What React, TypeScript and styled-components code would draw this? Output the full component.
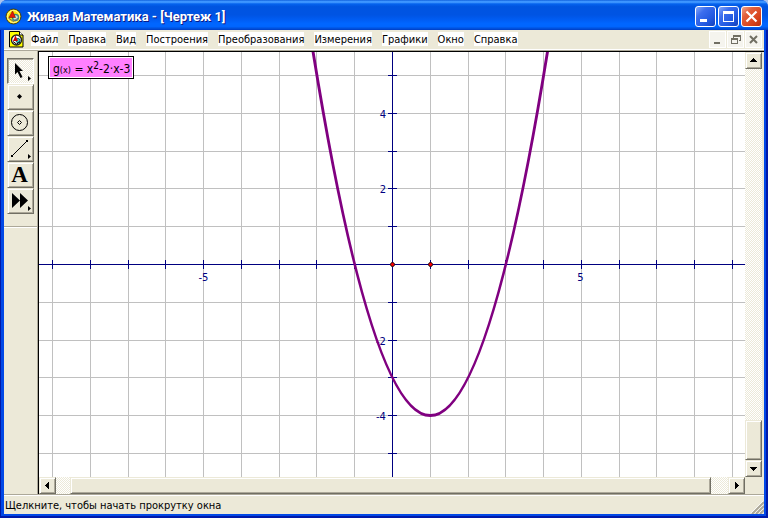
import React from "react";
import styled, { createGlobalStyle, css } from "styled-components";

const FACE = "#ece9d8";
const SHADOW = "#aca899";
const DARK = "#716f64";
const NAVY = "#000080";
const UI_FONT = `"DejaVu Sans Condensed", "DejaVu Sans", sans-serif`;

const GlobalStyle = createGlobalStyle`
  * { box-sizing: border-box; }
  body { margin: 0; background: #a9c3ee; font-family: ${UI_FONT}; font-size: 11px; color: #000; }
  button { margin: 0; padding: 0; border: 0; font: inherit; color: inherit; }
  svg { display: block; }
`;

const raised = css`
  background: ${FACE};
  border: 1px solid;
  border-color: ${FACE} ${DARK} ${DARK} ${FACE};
  box-shadow: inset 1px 1px 0 #fff, inset -1px -1px 0 ${SHADOW};
`;

const checker = css`
  background: repeating-conic-gradient(#fff 0 25%, ${FACE} 0 50%) 0 0 / 2px 2px;
`;

const Window = styled.div`
  display: flex;
  flex-direction: column;
  height: 100vh;
  min-height: 320px;
  border-radius: 7px 7px 0 0;
  overflow: hidden;
  background: #0148e6;
`;

const TitleBar = styled.header`
  display: flex;
  align-items: center;
  flex: none;
  height: 30px;
  padding: 3px 6px 0 5px;
  gap: 5px;
  background: linear-gradient(
    #0a5ad8 0, #3d95ff 4%, #3d95ff 8%, #0563ee 13%, #0054e0 22%, #0054e3 50%,
    #005cf2 65%, #0066ff 78%, #0066ff 88%, #0050dc 95%, #003dc4 100%
  );
`;

const Title = styled.h1`
  flex: 1;
  margin: 0;
  font-family: Roboto, sans-serif;
  font-size: 13px;
  line-height: 20px;
  font-weight: 700;
  color: #fff;
  white-space: nowrap;
  text-shadow: 1px 1px 0 #0a1883;
`;

const CaptionGroup = styled.div`
  display: flex;
  gap: 2px;
`;

const CaptionButton = styled.button<{ $close?: boolean }>`
  width: 21px;
  height: 21px;
  border: 1px solid #fff;
  border-radius: 3px;
  background: ${(p) =>
    p.$close
      ? "linear-gradient(135deg, #f0a48c 0, #e2603c 30%, #d8431c 70%, #b83010 100%)"
      : "linear-gradient(135deg, #86a8f8 0, #3c6eee 30%, #2158e0 70%, #1440b8 100%)"};
`;

const Frame = styled.div`
  display: flex;
  flex-direction: column;
  flex: 1;
  min-height: 0;
  padding: 0 2px 2px 3px;
  border: solid #0019a8;
  border-width: 0 2px 2px 1px;
`;

const MenuBar = styled.nav`
  display: flex;
  align-items: flex-start;
  flex: none;
  height: 21px;
  padding: 1px 2px 0 5px;
  background: ${FACE};
  border-bottom: 1px solid ${SHADOW};
  box-shadow: inset 0 -1px 0 #fff;
`;

const MenuList = styled.div`
  display: flex;
  flex: 1;
  gap: 10px;
  padding: 1px 0 0 7px;
`;

const MenuItem = styled.button`
  height: 14px;
  padding-top: 1px;
  background: #fff;
  line-height: 13px;
  white-space: nowrap;
`;

const ChildButtons = styled.div`
  display: flex;
  gap: 1px;
`;

const ChildButton = styled.button`
  width: 17px;
  height: 17px;
  background: #f5f4ee;
  border: 1px solid #fff;
`;

const Workspace = styled.div`
  display: flex;
  flex: 1;
  min-height: 0;
  background: ${FACE};
`;

const ToolPanel = styled.div`
  flex: none;
  width: 34px;
  padding-top: 7px;
  border-right: 1px solid ${SHADOW};
`;

const ToolList = styled.div`
  display: flex;
  flex-direction: column;
  padding: 0 3px 12px;
  border-bottom: 1px solid ${SHADOW};
  box-shadow: 0 1px 0 #fff;
`;

const ToolButton = styled.button<{ $pressed?: boolean }>`
  width: 27px;
  height: 26px;
  ${raised}
  ${(p) =>
    p.$pressed &&
    css`
      ${checker}
      border-color: ${DARK} #fff #fff ${DARK};
      box-shadow: inset 1px 1px 0 ${SHADOW};
    `}
`;

const Document = styled.main`
  display: grid;
  grid-template-columns: minmax(0, 1fr) 17px;
  grid-template-rows: minmax(0, 1fr) 17px;
  flex: 1;
  min-width: 0;
  padding-right: 2px;
  border: solid #000;
  border-width: 1px 0 0 1px;
`;

const Sketch = styled.div`
  position: relative;
  overflow: hidden;
  background: #fff;
`;

const Formula = styled.div`
  position: absolute;
  left: 9px;
  top: 4px;
  height: 23px;
  padding: 2px 3px 0 4px;
  border: 1px solid #000;
  box-shadow: inset 0 0 0 1px #fff;
  background: #ff80ff;
  font-size: 12px;
  line-height: 20px;
  white-space: nowrap;
  small { font-size: 9px; }
  sup { font-size: 10px; line-height: 0; vertical-align: 4px; }
`;

const ScrollBar = styled.div<{ $vertical?: boolean }>`
  display: flex;
  flex-direction: ${(p) => (p.$vertical ? "column" : "row")};
  ${checker}
`;

const ScrollButton = styled.button`
  flex: none;
  width: 17px;
  height: 17px;
  ${raised}
`;

const Gap = styled.div<{ $grow: number }>`
  flex: ${(p) => p.$grow} 0 0;
`;

const Thumb = styled.div<{ $grow: number }>`
  flex: ${(p) => p.$grow} 0 0;
  ${raised}
`;

const StatusBar = styled.footer`
  display: flex;
  justify-content: space-between;
  align-items: flex-end;
  flex: none;
  height: 20px;
  padding-left: 1px;
  background: ${FACE};
  border-top: 1px solid ${SHADOW};
  box-shadow: inset 0 1px 0 #fff;
  line-height: 16px;
  white-space: nowrap;
`;

const menus = ["Файл", "Правка", "Вид", "Построения", "Преобразования", "Измерения", "Графики", "Окно", "Справка"];

const UNIT = 37.77;
const ORIGIN = { x: 353, y: 212 };
const px = (x: number) => ORIGIN.x + 0.5 + x * UNIT;
const py = (y: number) => ORIGIN.y + 0.5 - y * UNIT;
const snapX = (i: number) => Math.round(ORIGIN.x + i * UNIT) + 0.5;
const snapY = (i: number) => Math.round(ORIGIN.y - i * UNIT) + 0.5;
const range = (from: number, to: number) => Array.from({ length: to - from + 1 }, (_, i) => from + i);

function Plot() {
  const columns = range(-9, 30);
  const rows = range(-20, 5);
  return (
    <svg width="100%" height="100%" role="img" aria-label="g(x) = x²-2·x-3">
      <g shapeRendering="crispEdges" fill="none">
        <g stroke="#c0c0c0">
          {columns.map((i) => <line key={i} x1={snapX(i)} x2={snapX(i)} y1="0" y2="100%" />)}
          {rows.map((i) => <line key={i} x1="0" x2="100%" y1={snapY(i)} y2={snapY(i)} />)}
        </g>
        <g stroke={NAVY}>
          <line x1="0" x2="100%" y1={snapY(0)} y2={snapY(0)} />
          <line x1={snapX(0)} x2={snapX(0)} y1="0" y2="100%" />
          {columns.map((i) => <line key={i} x1={snapX(i)} x2={snapX(i)} y1={ORIGIN.y - 4} y2={ORIGIN.y + 5} />)}
          {rows.map((i) => <line key={i} x1={ORIGIN.x - 4} x2={ORIGIN.x + 5} y1={snapY(i)} y2={snapY(i)} />)}
        </g>
      </g>
      <g fill={NAVY} fontFamily='"DejaVu Sans", sans-serif' fontSize="10">
        <g textAnchor="end">
          <text x="347" y={snapY(4) + 4}>4</text>
          <text x="347" y={snapY(2) + 4}>2</text>
          <text x="347" y={snapY(-2) + 4}>-2</text>
          <text x="347" y={snapY(-4) + 4}>-4</text>
        </g>
        <g textAnchor="middle">
          <text x={snapX(-5)} y="229">-5</text>
          <text x={snapX(5) - 1} y="229">5</text>
        </g>
      </g>
      <path
        d={`M${px(-3)} ${py(12)} Q${px(1)} ${py(-20)} ${px(5)} ${py(12)}`}
        fill="none"
        stroke="#800080"
        strokeWidth="3"
      />
      {[0, 1].map((i) => (
        <circle key={i} cx={snapX(i)} cy={snapY(0)} r="2" fill="#f00" stroke="#301010" />
      ))}
    </svg>
  );
}

const Logo = () => (
  <svg width="17" height="17" viewBox="0 0 17 17" aria-hidden="true">
    <circle cx="8.500" cy="8.500" r="7.500" fill="#ffe600" stroke="#3a3a20" />
    <circle cx="8.500" cy="8.500" r="6" fill="none" stroke="#fff3a0" />
    <circle cx="10.500" cy="9.500" r="3" fill="#c8ece0" stroke="#3a8a88" strokeWidth="1.400" />
    <path d="M7.500 3L10.500 9.500H4z" fill="#e81808" stroke="#801000" strokeWidth=".6" />
    <path d="M3.500 10l5 3.500L13 10" fill="none" stroke="#667" />
  </svg>
);

const DocumentIcon = () => (
  <svg width="15" height="17" viewBox="0 0 15 17" aria-hidden="true">
    <path d="M.5 .5h10l3.500 3.500v12H.5z" fill="#ffff00" stroke="#000" />
    <path d="M10.500 .5v3.500h3.500" fill="#fff" stroke="#000" />
    <circle cx="7.500" cy="9" r="5" fill="#fff" stroke="#222" strokeWidth="1.400" />
    <circle cx="9" cy="9.500" r="2" fill="#40d0d0" stroke="#006060" />
    <path d="M6.500 4.500L9 10H4z" fill="#d00000" />
    <path d="M4 10.500l3.500 2.500 3.500-2" fill="none" stroke="#000" />
  </svg>
);

const Flyout = () => <path d="M20 17l3 2.500-3 2.500z" fill="#000" />;

const tools: { label: string; art: React.ReactNode }[] = [
  {
    label: "Стрелка",
    art: <><path d="M7 4l8 8h-3.500l3 6-2 1-3-6L7 15.500z" /><Flyout /></>,
  },
  { label: "Точка", art: <path d="M11.500 9l2.500 2.500-2.500 2.500L9 11.500z" /> },
  {
    label: "Окружность",
    art: (
      <g fill="none" stroke="#000">
        <circle cx="11.500" cy="11.500" r="8" />
        <path d="M11.500 9.500l2 2-2 2-2-2z" />
      </g>
    ),
  },
  {
    label: "Отрезок",
    art: (
      <>
        <path d="M4 19L19 4" stroke="#000" />
        <path d="M3 18h2v2H3zM18 3h2v2h-2z" />
        <Flyout />
      </>
    ),
  },
  {
    label: "Текст",
    art: (
      <text x="11.500" y="19" textAnchor="middle" fontFamily='"Liberation Serif", serif' fontWeight="700" fontSize="23">
        A
      </text>
    ),
  },
  {
    label: "Инструменты",
    art: <><path d="M4 4l8 7.500L4 19zM12 4l8 7.500L12 19z" /><Flyout /></>,
  },
];

const Arrow = ({ d }: { d: string }) => (
  <svg width="15" height="15" viewBox="0 0 15 15" shapeRendering="crispEdges" aria-hidden="true">
    <path d={d} />
  </svg>
);

export default function App() {
  return (
    <>
      <GlobalStyle />
      <Window>
        <TitleBar>
          <Logo />
          <Title>Живая Математика - [Чертеж 1]</Title>
          <CaptionGroup>
            <CaptionButton aria-label="Свернуть">
              <svg width="19" height="19"><path d="M4 12h7v3H4z" fill="#fff" /></svg>
            </CaptionButton>
            <CaptionButton aria-label="Развернуть">
              <svg width="19" height="19"><path d="M4 4h11v11H4zM5 7v7h9V7z" fill="#fff" fillRule="evenodd" /></svg>
            </CaptionButton>
            <CaptionButton $close aria-label="Закрыть">
              <svg width="19" height="19"><path d="M4.500 4.500l10 10m0-10l-10 10" stroke="#fff" strokeWidth="2.200" /></svg>
            </CaptionButton>
          </CaptionGroup>
        </TitleBar>
        <Frame>
          <MenuBar>
            <DocumentIcon />
            <MenuList>
              {menus.map((name) => <MenuItem key={name}>{name}</MenuItem>)}
            </MenuList>
            <ChildButtons>
              <ChildButton aria-label="Свернуть чертеж">
                <svg width="15" height="15"><path d="M4 10h6v2H4z" fill={DARK} /></svg>
              </ChildButton>
              <ChildButton aria-label="Восстановить чертеж">
                <svg width="15" height="15" shapeRendering="crispEdges">
                  <path d="M5 3h8v6h-2V8h1V5H6v1H5zM3 6h7v6H3zM4 8v3h5V8z" fill={DARK} fillRule="evenodd" />
                </svg>
              </ChildButton>
              <ChildButton aria-label="Закрыть чертеж">
                <svg width="15" height="15"><path d="M4 4l7 7m0-7l-7 7" stroke={DARK} strokeWidth="2" /></svg>
              </ChildButton>
            </ChildButtons>
          </MenuBar>
          <Workspace>
            <ToolPanel>
              <ToolList>
                {tools.map((tool, i) => (
                  <ToolButton key={tool.label} $pressed={i === 0} aria-pressed={i === 0} aria-label={tool.label}>
                    <svg width="25" height="24" viewBox="0 0 25 24">{tool.art}</svg>
                  </ToolButton>
                ))}
              </ToolList>
            </ToolPanel>
            <Document>
              <Sketch>
                <Plot />
                <Formula>g<small>(x)</small> = x<sup>2</sup>-2·x-3</Formula>
              </Sketch>
              <ScrollBar $vertical>
                <ScrollButton aria-label="Вверх"><Arrow d="M7 5h1v1h1v1h1v1h1v1H4V8h1V7h1V6h1z" /></ScrollButton>
                <Gap $grow={353} />
                <Thumb $grow={38} />
                <ScrollButton aria-label="Вниз"><Arrow d="M4 6h7v1h-1v1H9v1H8v1H7V9H6V8H5V7H4z" /></ScrollButton>
              </ScrollBar>
              <ScrollBar>
                <ScrollButton aria-label="Влево"><Arrow d="M9 4v7H8v-1H7V9H6V8H5V7h1V6h1V5h1V4z" /></ScrollButton>
                <Gap $grow={14} />
                <Thumb $grow={641} />
                <Gap $grow={17} />
                <ScrollButton aria-label="Вправо"><Arrow d="M6 4v7h1v-1h1V9h1V8h1V7H9V6H8V5H7V4z" /></ScrollButton>
              </ScrollBar>
            </Document>
          </Workspace>
          <StatusBar>
            <span>Щелкните, чтобы начать прокрутку окна</span>
            <svg width="13" height="13" aria-hidden="true">
              <path d="M0 12L12 0M4 12l8-8M8 12l4-4" stroke="#fff" />
              <path d="M1 13L13 1M5 13l8-8M9 13l4-4" stroke={SHADOW} strokeWidth="2" />
            </svg>
          </StatusBar>
        </Frame>
      </Window>
    </>
  );
}
